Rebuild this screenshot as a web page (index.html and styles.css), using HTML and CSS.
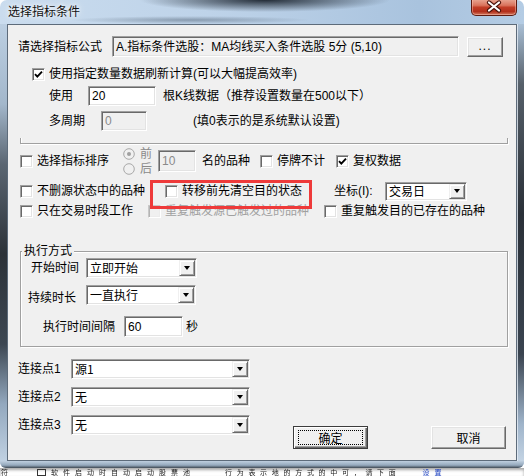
FILE: index.html
```html
<!DOCTYPE html>
<html lang="zh-CN">
<head>
<meta charset="utf-8">
<title>选择指标条件</title>
<link rel="stylesheet" href="styles.css">
</head>
<body>
<div class="window">
  <div class="titlebar">
    <span class="title">选择指标条件</span>
    <div class="close">
      <svg width="44" height="16" viewBox="0 0 44 16">
        <path d="M17 3.5 L27 11.5 M27 3.5 L17 11.5" stroke="#4a120a" stroke-width="4.2" stroke-linecap="round" fill="none"/>
        <path d="M17 3.5 L27 11.5 M27 3.5 L17 11.5" stroke="#fff" stroke-width="2.2" stroke-linecap="round" fill="none"/>
      </svg>
    </div>
  </div>
  <div class="mid">
    <div class="frame-l"></div>
    <div class="client">
      <div class="row r-formula">
        <span class="lbl w94">请选择指标公式</span>
        <div class="edit ro formula">A.指标条件选股：MA均线买入条件选股 5分 (5,10)</div>
        <div class="btn dots">...</div>
      </div>

      <div class="row r-usechk">
        <span class="chk"><svg width="9" height="9" viewBox="0 0 9 9"><path d="M1 4.2 L3.3 6.6 L8 1.6" stroke="#000" stroke-width="1.9" fill="none"/></svg></span>
        <span class="cl">使用指定数量数据刷新计算(可以大幅提高效率)</span>
      </div>

      <div class="row r-use">
        <span class="lbl w39">使用</span>
        <div class="edit e20">20</div>
        <span class="txt m7">根K线数据（推荐设置数量在500以下）</span>
      </div>

      <div class="row r-period">
        <span class="lbl w52">多周期</span>
        <div class="edit dis e0">0</div>
        <span class="txt m46">(填0表示的是系统默认设置)</span>
      </div>

      <div class="sep"></div>

      <div class="row r-sort">
        <span class="chk"></span>
        <span class="cl w86">选择指标排序</span>
        <div class="radios">
          <div class="rad">
            <svg width="12" height="12" viewBox="0 0 12 12"><circle cx="6" cy="6" r="5.3" fill="#f0f0f0" stroke="#a8a8a8"/><circle cx="6" cy="6" r="2" fill="#a0a0a0"/></svg>
            <span>前</span>
          </div>
          <div class="rad">
            <svg width="12" height="12" viewBox="0 0 12 12"><circle cx="6" cy="6" r="5.3" fill="#f0f0f0" stroke="#a8a8a8"/></svg>
            <span>后</span>
          </div>
        </div>
        <div class="edit dis e10">10</div>
        <span class="txt m6 w58">名的品种</span>
        <span class="chk"></span>
        <span class="cl w59">停牌不计</span>
        <span class="chk"><svg width="9" height="9" viewBox="0 0 9 9"><path d="M1 4.2 L3.3 6.6 L8 1.6" stroke="#000" stroke-width="1.9" fill="none"/></svg></span>
        <span class="cl">复权数据</span>
      </div>

      <div class="row r-six">
        <span class="chk"></span>
        <span class="cl w128">不删源状态中的品种</span>
        <span class="chk"></span>
        <span class="cl w152">转移前先清空目的状态</span>
        <span class="txt w51">坐标(I):</span>
        <div class="combo c-axis">
          <span class="ctext">交易日</span>
          <span class="drop"><i class="arrow"></i></span>
        </div>
      </div>

      <div class="row r-seven">
        <span class="chk"></span>
        <span class="cl w111">只在交易时段工作</span>
        <span class="chk disabled"></span>
        <span class="cl w159 grey">重复触发源已触发过的品种</span>
        <span class="chk"></span>
        <span class="cl">重复触发目的已存在的品种</span>
      </div>

      <div class="group">
        <span class="legend">执行方式</span>
        <div class="row g1">
          <span class="lbl w55">开始时间</span>
          <div class="combo c-start">
            <span class="ctext">立即开始</span>
            <span class="drop"><i class="arrow"></i></span>
          </div>
        </div>
        <div class="row g2">
          <span class="lbl w58 low">持续时长</span>
          <div class="combo c-dur">
            <span class="ctext">一直执行</span>
            <span class="drop"><i class="arrow"></i></span>
          </div>
        </div>
        <div class="row g3">
          <span class="lbl w81">执行时间间隔</span>
          <div class="edit e60">60</div>
          <span class="txt m3">秒</span>
        </div>
      </div>

      <div class="bottom">
        <div class="conns">
          <div class="row conn">
            <span class="lbl w53">连接点1</span>
            <div class="combo c-conn">
              <span class="ctext">源1</span>
              <span class="drop"><i class="arrow"></i></span>
            </div>
          </div>
          <div class="row conn">
            <span class="lbl w53">连接点2</span>
            <div class="combo c-conn">
              <span class="ctext">无</span>
              <span class="drop"><i class="arrow"></i></span>
            </div>
          </div>
          <div class="row conn">
            <span class="lbl w53">连接点3</span>
            <div class="combo c-conn">
              <span class="ctext">无</span>
              <span class="drop"><i class="arrow"></i></span>
            </div>
          </div>
        </div>
        <div class="btns">
          <div class="pbtn default"><span class="focus">确定</span></div>
          <div class="pbtn">取消</div>
        </div>
      </div>

      <div class="redbox"></div>
    </div>
    <div class="frame-r"></div>
  </div>
  <div class="frame-b"></div>
</div>
<div class="desk">
  <span class="d1">符</span>
  <span class="dbox"></span>
  <span class="d2">软件启动时自动启动股票池</span>
  <span class="d3">行为表示地的方式的中可，请下面</span>
  <span class="dlink">设置</span>
</div>
</body>
</html>
```

FILE: styles.css
```css
* { box-sizing: border-box; }
html, body { margin: 0; padding: 0; }
body {
  width: 524px;
  height: 476px;
  overflow: hidden;
  background: #fff;
  font-family: "Liberation Sans", "Noto Sans CJK SC", sans-serif;
  font-size: 12px;
  line-height: 14px;
  color: #000;
}

/* ---------- window frame ---------- */
.window {
  width: 524px;
  height: 468px;
  border-radius: 7px 7px 6px 6px;
  overflow: hidden;
  display: flex;
  flex-direction: column;
  background:
    radial-gradient(ellipse 125px 12px at 265px 0px, rgba(22, 30, 40, .92), rgba(22, 30, 40, 0)),
    radial-gradient(ellipse 120px 4px at 190px 20px, rgba(70, 86, 104, .45), rgba(70, 86, 104, 0)),
    linear-gradient(to right, #cadcee 0, #bed3e9 40%, #a9c3de 80%, #b4cce4 100%);
}
.titlebar {
  height: 24px;
  flex: none;
  display: flex;
  align-items: flex-start;
  padding-left: 8px;
  padding-right: 7px;
}
.title {
  margin-top: 4px;
  font-family: "Noto Sans CJK SC", sans-serif;
  font-size: 12px;
  line-height: 14px;
  color: #111;
  text-shadow: 0 0 4px #fff, 0 0 8px rgba(255, 255, 255, .9);
}
.close {
  margin-left: auto;
  margin-top: -1px;
  width: 46px;
  height: 17px;
  display: flex;
  align-items: center;
  justify-content: center;
  border: 1px solid #5e1b10;
  border-top: none;
  border-radius: 0 0 5px 5px;
  background: linear-gradient(to bottom, #e9a996 0%, #d9735c 40%, #c23d26 52%, #b3301c 78%, #d27a60 100%);
  box-shadow: inset 0 0 0 1px rgba(255, 205, 190, .45);
}
.mid { display: flex; height: 437px; flex: none; }
.frame-l {
  width: 7px;
  background: linear-gradient(to bottom, #bccfe2 0, #a3b7cb 80px, #5b6672 140px, #2c3238 230px, #3d4752 320px, #93a8be 380px, #c0d1e2 437px);
}
.frame-r {
  width: 7px;
  background: linear-gradient(to bottom, #a9bfd5 0, #56606a 60px, #2a3038 190px, #3a4450 330px, #9fb4ca 400px, #c3d3e3 437px);
  box-shadow: inset 1px 0 0 rgba(230, 238, 246, .8);
}
.frame-b {
  height: 7px;
  flex: none;
  background: linear-gradient(to bottom, #bfcfdf 0, #94a8bc 60%, #3e4852 100%);
}

/* ---------- client ---------- */
.client {
  width: 510px;
  height: 437px;
  border: 1px solid #5d6b7a;
  background: #f0f0f0;
  position: relative;
  padding-left: 10px;
  display: flex;
  flex-direction: column;
  align-items: flex-start;
  font-family: "Liberation Sans", "Noto Sans CJK SC", sans-serif;
}
.row { display: flex; align-items: center; flex: none; white-space: nowrap; }
.row > * { flex: none; }

.lbl, .txt, .cl { white-space: nowrap; }
.cl { margin-left: 4px; }
.grey { color: #a0a0a0; }

.w39 { width: 39px; } .w51 { width: 51px; } .w52 { width: 52px; } .w53 { width: 53px; }
.w55 { width: 55px; } .w58 { width: 58px; } .w59 { width: 59px; } .w81 { width: 81px; }
.w86 { width: 86px; } .w94 { width: 94px; } .w111 { width: 111px; } .w128 { width: 128px; }
.w152 { width: 152px; } .w159 { width: 159px; }
.m3 { margin-left: 3px; } .m6 { margin-left: 6px; } .m7 { margin-left: 7px; } .m46 { margin-left: 46px; }

/* sunken edit */
.edit {
  background: #fff;
  border: 1px solid;
  border-color: #a0a0a0 #fff #fff #a0a0a0;
  box-shadow: inset 1px 1px 0 #696969, inset -1px -1px 0 #e3e3e3;
  display: flex;
  align-items: center;
  padding-left: 3px;
  white-space: nowrap;
  overflow: hidden;
}
.edit.ro { background: #f0f0f0; }
.edit.dis { background: #f0f0f0; color: #8a8a8a; }

/* raised button */
.btn, .pbtn {
  background: #f0f0f0;
  border: 1px solid;
  border-color: #fff #696969 #696969 #fff;
  box-shadow: inset -1px -1px 0 #a0a0a0, inset 1px 1px 0 #e3e3e3;
  display: flex;
  align-items: center;
  justify-content: center;
}

/* checkbox */
.chk {
  width: 13px;
  height: 13px;
  background: #fff;
  border: 1px solid;
  border-color: #a0a0a0 #fff #fff #a0a0a0;
  box-shadow: inset 1px 1px 0 #696969, inset -1px -1px 0 #e3e3e3;
  display: flex;
  align-items: center;
  justify-content: center;
}
.chk.disabled {
  background: #f0f0f0;
  border-color: #c8c8c8 #fff #fff #c8c8c8;
  box-shadow: inset 1px 1px 0 #b4b4b4, inset -1px -1px 0 #ececec;
}

/* combo */
.combo {
  background: #fff;
  border: 1px solid;
  border-color: #a0a0a0 #fff #fff #a0a0a0;
  box-shadow: inset 1px 1px 0 #696969, inset -1px -1px 0 #e3e3e3;
  display: flex;
  align-items: stretch;
  padding: 1px;
}
.ctext {
  flex: 1;
  display: flex;
  align-items: center;
  padding-left: 2px;
  font-family: "Noto Sans CJK SC", sans-serif;
}
.drop {
  width: 16px;
  flex: none;
  background: #f0f0f0;
  border: 1px solid;
  border-color: #f0f0f0 #696969 #696969 #f0f0f0;
  box-shadow: inset 1px 1px 0 #fff, inset -1px -1px 0 #a0a0a0;
  display: flex;
  align-items: center;
  justify-content: center;
}
.arrow {
  width: 0;
  height: 0;
  border-left: 3.5px solid transparent;
  border-right: 3.5px solid transparent;
  border-top: 4px solid #000;
}

/* ---------- rows ---------- */
.r-formula { margin-top: 11px; height: 21px; }
.formula { width: 347px; height: 21px; padding-left: 3px; }
.dots { width: 36px; height: 20px; margin-left: 8px; letter-spacing: 1px; padding-bottom: 2px; }

.r-usechk { margin-top: 7px; height: 20px; margin-left: 14px; }
.r-use { margin-top: 2px; height: 20px; margin-left: 31px; }
.e20 { width: 68px; height: 20px; }
.r-period { margin-top: 5px; height: 20px; margin-left: 31px; }
.e0 { width: 46px; height: 20px; }

.sep {
  margin-top: 7px;
  margin-left: 2px;
  width: 488px;
  height: 6px;
  flex: none;
  border: 1px solid #a0a0a0;
  border-top: none;
  box-shadow: 1px 1px 0 #fff, inset 1px 0 0 #fff;
}

.r-sort { margin-top: 3px; height: 28px; margin-left: 2px; }
.radios { width: 35px; display: flex; flex-direction: column; }
.rad { height: 15px; display: flex; align-items: center; color: #8a8a8a; }
.rad span { margin-left: 5px; }
.e10 { width: 38px; height: 22px; }

.r-six { margin-top: 6px; height: 20px; margin-left: 2px; }
.c-axis { width: 82px; height: 19px; }

.r-seven { margin-top: 2px; height: 16px; margin-left: 2px; }

/* ---------- group ---------- */
.group {
  margin-top: 32px;
  margin-left: 2px;
  width: 488px;
  height: 96px;
  flex: none;
  border: 1px solid #a0a0a0;
  box-shadow: inset 1px 1px 0 #fff, 1px 1px 0 #fff;
  position: relative;
  display: flex;
  flex-direction: column;
  align-items: flex-start;
}
.legend {
  position: absolute;
  left: 1px;
  top: -8px;
  padding: 0 2px;
  background: #f0f0f0;
  line-height: 14px;
}
.g1 { margin-top: 6px; margin-left: 10px; height: 20px; }
.c-start { width: 111px; height: 20px; }
.g2 { margin-top: 7px; margin-left: 7px; height: 20px; }
.low { padding-top: 5px; }
.c-dur { width: 110px; height: 20px; }
.g3 { margin-top: 11px; margin-left: 22px; height: 21px; }
.e60 { width: 59px; height: 21px; }

/* ---------- bottom ---------- */
.bottom { margin-top: 12px; height: 90px; display: flex; flex: none; }
.conns { display: flex; flex-direction: column; gap: 8px; }
.conn { height: 20px; }
.c-conn { width: 179px; height: 20px; }
.btns { margin-left: 43px; align-self: flex-end; display: flex; gap: 63px; }
.pbtn { width: 75px; height: 23px; font-family: "Noto Sans CJK SC", sans-serif; }
.pbtn.default {
  border: 1px solid #3c3c3c;
  box-shadow: inset 1px 1px 0 #fff, inset -1px -1px 0 #696969, inset -2px -2px 0 #a0a0a0;
  padding: 3px 4px;
  align-items: stretch;
}
.focus {
  flex: 1;
  border: 1px dotted #000;
  display: flex;
  align-items: center;
  justify-content: center;
}

/* highlight overlay */
.redbox {
  position: absolute;
  left: 142px;
  top: 155px;
  width: 162px;
  height: 29px;
  border: 3px solid #ee3a3a;
}

/* ---------- desktop strip below window ---------- */
.desk {
  height: 8px;
  overflow: hidden;
  display: flex;
  align-items: center;
  background: #fff;
  font-family: "Noto Sans CJK SC", sans-serif;
  font-size: 7px;
  line-height: 8px;
  color: #222;
  box-shadow: inset 0 2px 3px rgba(0, 0, 0, .35);
}
.desk > span { flex: none; filter: blur(0.4px); }
.d1 { margin-left: 1px; }
.dbox { width: 9px; height: 7px; margin-left: 29px; border: 1px solid #333; }
.d2 { margin-left: 5px; letter-spacing: 5px; }
.d3 { margin-left: 30px; letter-spacing: 4.7px; }
.dlink { margin-left: 22px; color: #1a3fc0; text-decoration: underline; letter-spacing: 5px; }
```
